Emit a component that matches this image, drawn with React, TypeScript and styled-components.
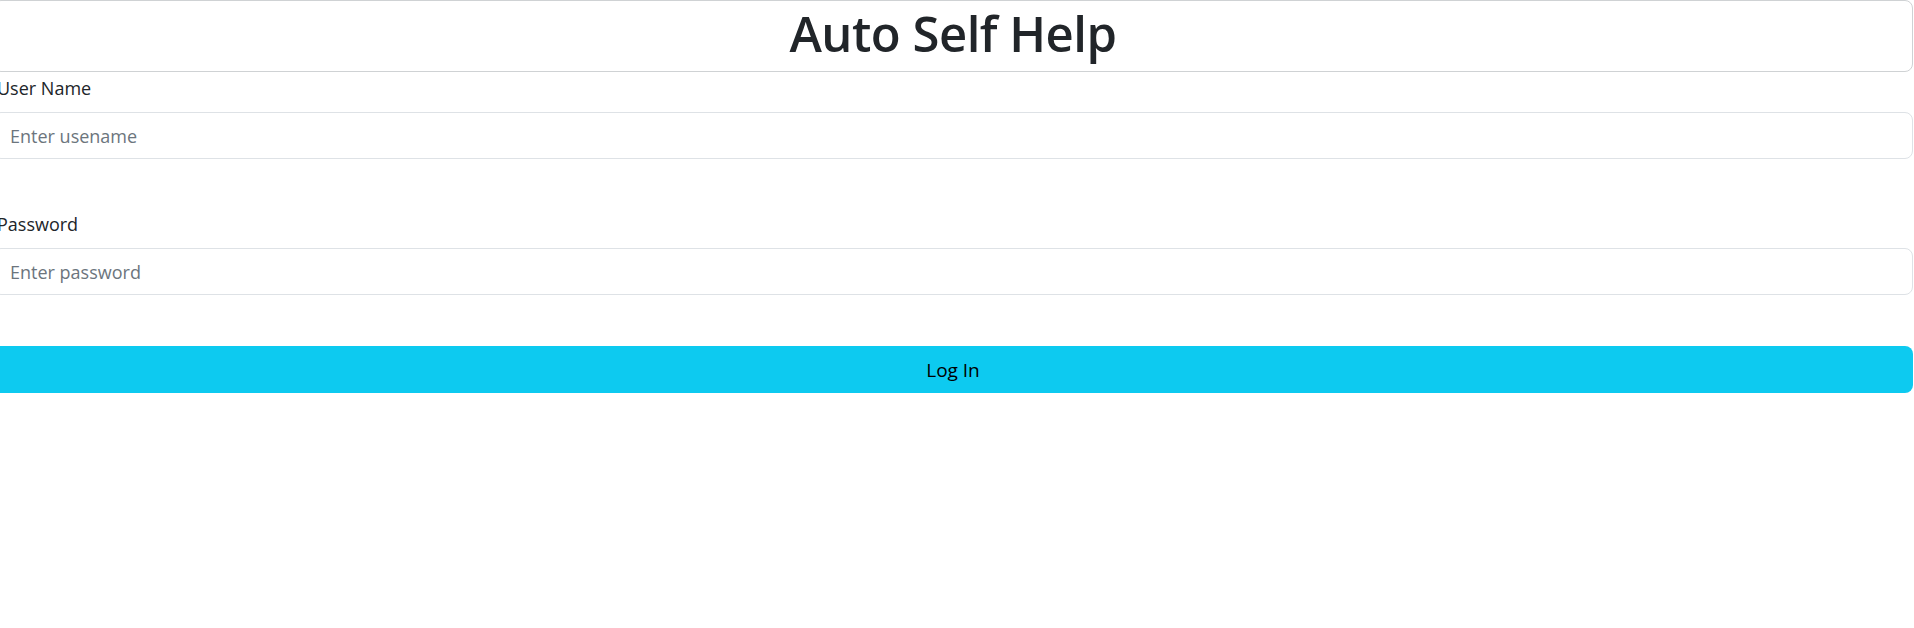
import React from "react";
import styled, { createGlobalStyle } from "styled-components";

const GlobalStyle = createGlobalStyle`
  html, body {
    margin: 0;
    padding: 0;
    background: #ffffff;
  }
  body {
    font-family: "Open Sans", "Noto Sans", "Liberation Sans", sans-serif;
    color: #212529;
    overflow: hidden;
  }
  * { box-sizing: border-box; }
`;

const Page = styled.div`
  width: 1920px;
  margin-left: -7px;
  display: flex;
  flex-direction: column;
`;

const Header = styled.div`
  height: 72px;
  padding-bottom: 5px;
  border: 1px solid #cfd2d4;
  border-radius: 8px;
  display: flex;
  align-items: center;
  justify-content: center;
`;

const Title = styled.h1`
  margin: 0;
  font-size: 49px;
  font-weight: 600;
  line-height: 1.2;
  letter-spacing: -0.5px;
  color: #212529;
`;

const Form = styled.form`
  display: flex;
  flex-direction: column;
`;

const Field = styled.div<{ $gapAfter: number }>`
  display: flex;
  flex-direction: column;
  margin-bottom: ${(p) => p.$gapAfter}px;
`;

const Label = styled.label`
  display: block;
  padding: 1px 0 0 4px;
  font-size: 18px;
  line-height: 30px;
  margin-bottom: 9px;
  color: #212529;
`;

const Input = styled.input`
  height: 47px;
  width: 100%;
  padding: 7px 15px 7px 16px;
  font-family: inherit;
  font-size: 18px;
  color: #212529;
  border: 1px solid #dee2e6;
  border-radius: 8px;
  background: #fff;
  outline: none;
  &::placeholder {
    color: #6c757d;
    opacity: 1;
  }
`;

const Button = styled.button`
  height: 47px;
  width: 100%;
  border: none;
  border-radius: 8px;
  background: #0dcaf0;
  color: #000;
  font-family: inherit;
  font-size: 19px;
  cursor: pointer;
`;

export default function App() {
  return (
    <>
      <GlobalStyle />
      <Page>
        <Header>
          <Title>Auto Self Help</Title>
        </Header>
        <Form onSubmit={(e) => e.preventDefault()}>
          <Field $gapAfter={49}>
            <Label htmlFor="user">User Name</Label>
            <Input id="user" type="text" placeholder="Enter usename" />
          </Field>
          <Field $gapAfter={51}>
            <Label htmlFor="pass">Password</Label>
            <Input id="pass" type="password" placeholder="Enter password" />
          </Field>
          <Button type="submit">Log In</Button>
        </Form>
      </Page>
    </>
  );
}
